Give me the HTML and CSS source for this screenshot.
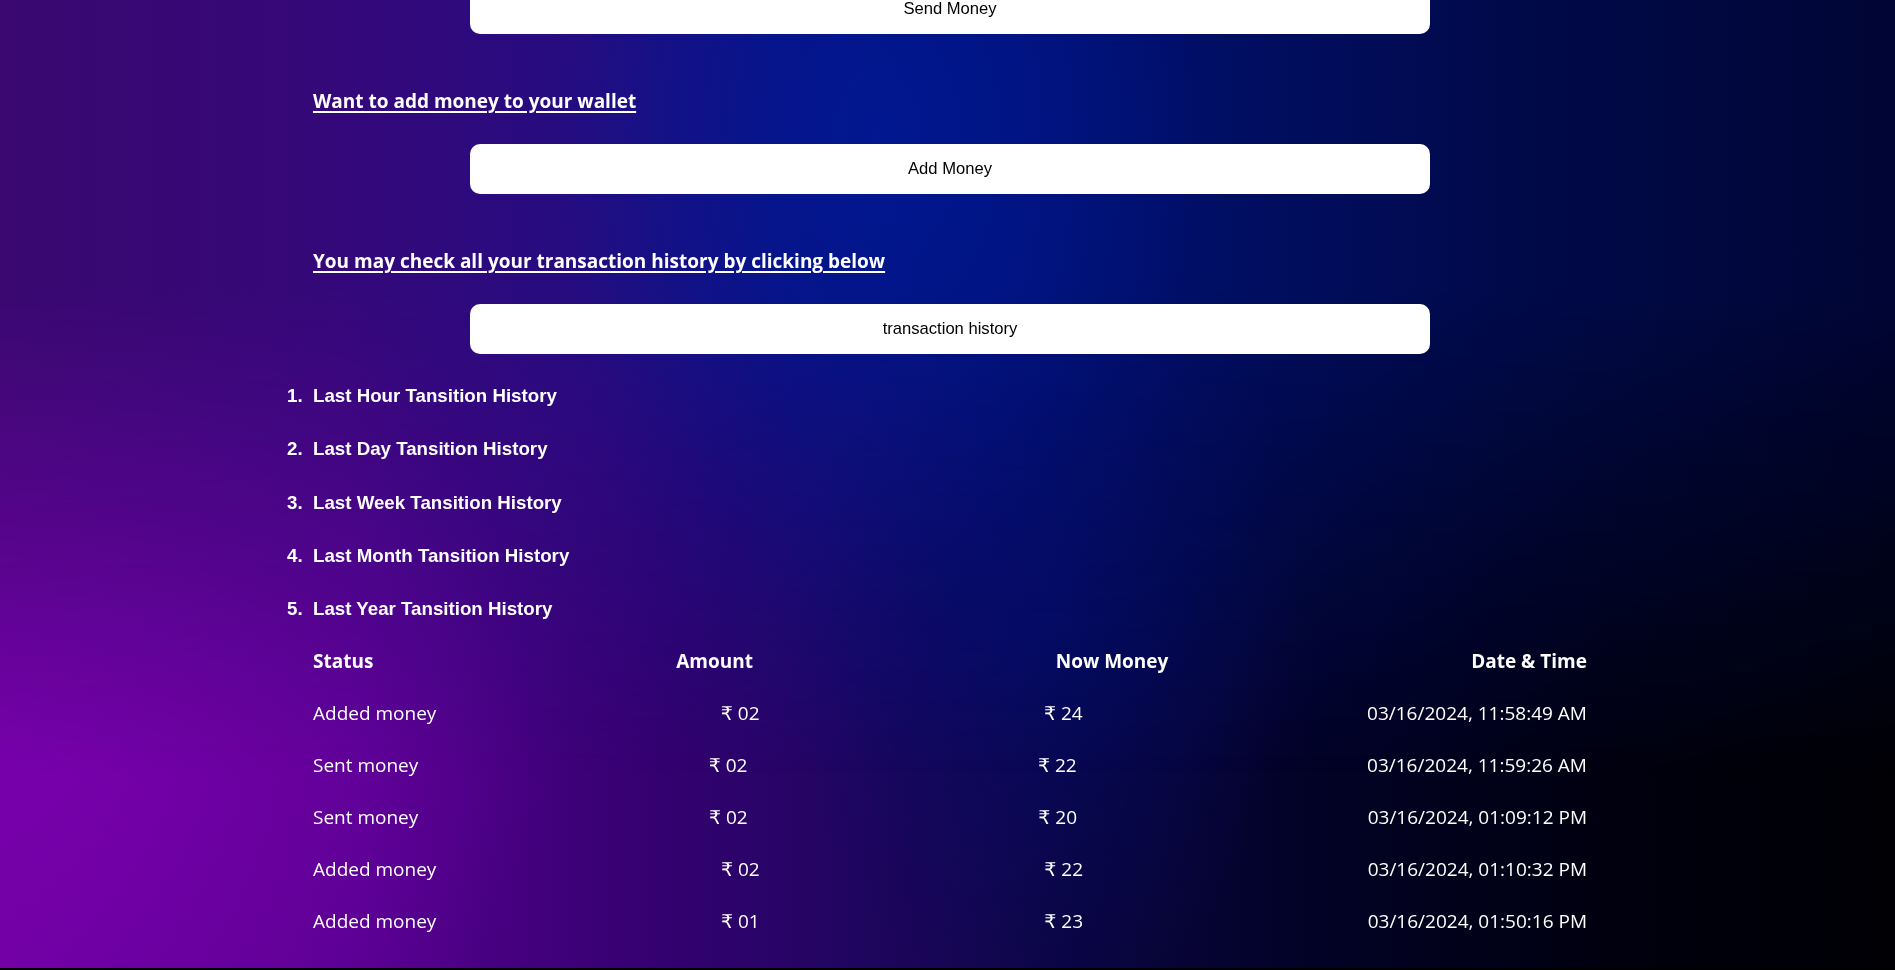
FILE: index.html
```html
<!DOCTYPE html>
<html lang="en">
<head>
<meta charset="utf-8">
<title>Wallet</title>
<link rel="stylesheet" href="styles.css">
</head>
<body>
<div class="bg-base"></div>
<div class="bg-top"></div>
<main class="page">
  <button class="action action-first">Send Money</button>
  <a class="prompt" href="#">Want to add money to your wallet</a>
  <button class="action">Add Money</button>
  <a class="prompt" href="#">You may check all your transaction history by clicking below</a>
  <button class="action">transaction history</button>
  <ol class="history-list">
    <li>Last Hour Tansition History</li>
    <li>Last Day Tansition History</li>
    <li>Last Week Tansition History</li>
    <li>Last Month Tansition History</li>
    <li>Last Year Tansition History</li>
  </ol>
  <div class="txn-table">
    <div class="txn-row txn-head"><span>Status</span><span>Amount</span><span>Now Money</span><span>Date &amp; Time</span></div>
    <div class="txn-row"><span>Added money</span><span>₹ 02</span><span>₹ 24</span><span>03/16/2024, 11:58:49 AM</span></div>
    <div class="txn-row"><span>Sent money</span><span>₹ 02</span><span>₹ 22</span><span>03/16/2024, 11:59:26 AM</span></div>
    <div class="txn-row"><span>Sent money</span><span>₹ 02</span><span>₹ 20</span><span>03/16/2024, 01:09:12 PM</span></div>
    <div class="txn-row"><span>Added money</span><span>₹ 02</span><span>₹ 22</span><span>03/16/2024, 01:10:32 PM</span></div>
    <div class="txn-row"><span>Added money</span><span>₹ 01</span><span>₹ 23</span><span>03/16/2024, 01:50:16 PM</span></div>
  </div>
</main>
</body>
</html>
```

FILE: styles.css
```css
html {
  background: #000;
}

body {
  margin: 0;
  min-height: 100vh;
  overflow: hidden;
  font-family: "Open Sans", "DejaVu Sans", sans-serif;
  color: #fff;
}

.bg-base,
.bg-top {
  position: fixed;
  top: 0;
  left: 0;
  right: 0;
  bottom: 2px;
}

.bg-base {
  z-index: -2;
  background:
    radial-gradient(ellipse 560px 500px at 0px 720px, rgba(120, 0, 172, 1), rgba(120, 0, 172, 0)),
    radial-gradient(ellipse 260px 420px at 1040px 600px, rgba(0, 12, 110, 0.6), rgba(0, 12, 110, 0)),
    linear-gradient(90deg, #6c00a0 0%, #55008f 19%, #3a0075 32%, #200560 45%, #0a0540 57%, #020225 70%, #00000f 85%, #000005 100%);
}

.bg-top {
  z-index: -1;
  background:
    radial-gradient(ellipse 340px 520px at 880px 140px, rgba(0, 26, 150, 0.75), rgba(0, 26, 150, 0)),
    linear-gradient(90deg, #3a0870 0%, #35087a 18%, #240c80 32%, #0a1082 42%, #001078 52%, #000e62 65%, #000a4a 80%, #000535 100%);
  -webkit-mask-image: linear-gradient(to bottom, #000 0%, #000 30%, transparent 80%);
  mask-image: linear-gradient(to bottom, #000 0%, #000 30%, transparent 80%);
}

.page {
  width: 1274px;
  margin: 0 auto;
  padding-left: 5px;
  display: flex;
  flex-direction: column;
}

.action {
  align-self: center;
  width: 960px;
  height: 50px;
  margin-top: 30px;
  border: none;
  border-radius: 10px;
  background: #fff;
  color: #000;
  font-family: "Liberation Sans", Arial, sans-serif;
  font-size: 16.6px;
  padding: 0;
}

.action-first {
  margin-top: -16px;
}

.prompt {
  align-self: flex-start;
  margin-top: 54px;
  line-height: 26px;
  font-size: 19px;
  font-weight: 700;
  color: #fff;
  text-decoration: underline;
  text-decoration-thickness: 2px;
  text-underline-offset: 3px;
}

.history-list {
  margin: 15px 0 0;
  padding: 0;
  font-family: "Liberation Sans", Arial, sans-serif;
  font-size: 18.72px;
  font-weight: 700;
}

.history-list li {
  line-height: 53.25px;
}

.history-list li::marker {
  content: counter(list-item) ".\00a0\00a0";
}

.txn-table {
  display: flex;
  flex-direction: column;
}

.txn-row {
  display: flex;
  justify-content: space-between;
  line-height: 52px;
  font-size: 19px;
}

.txn-head {
  font-weight: 700;
}
```
